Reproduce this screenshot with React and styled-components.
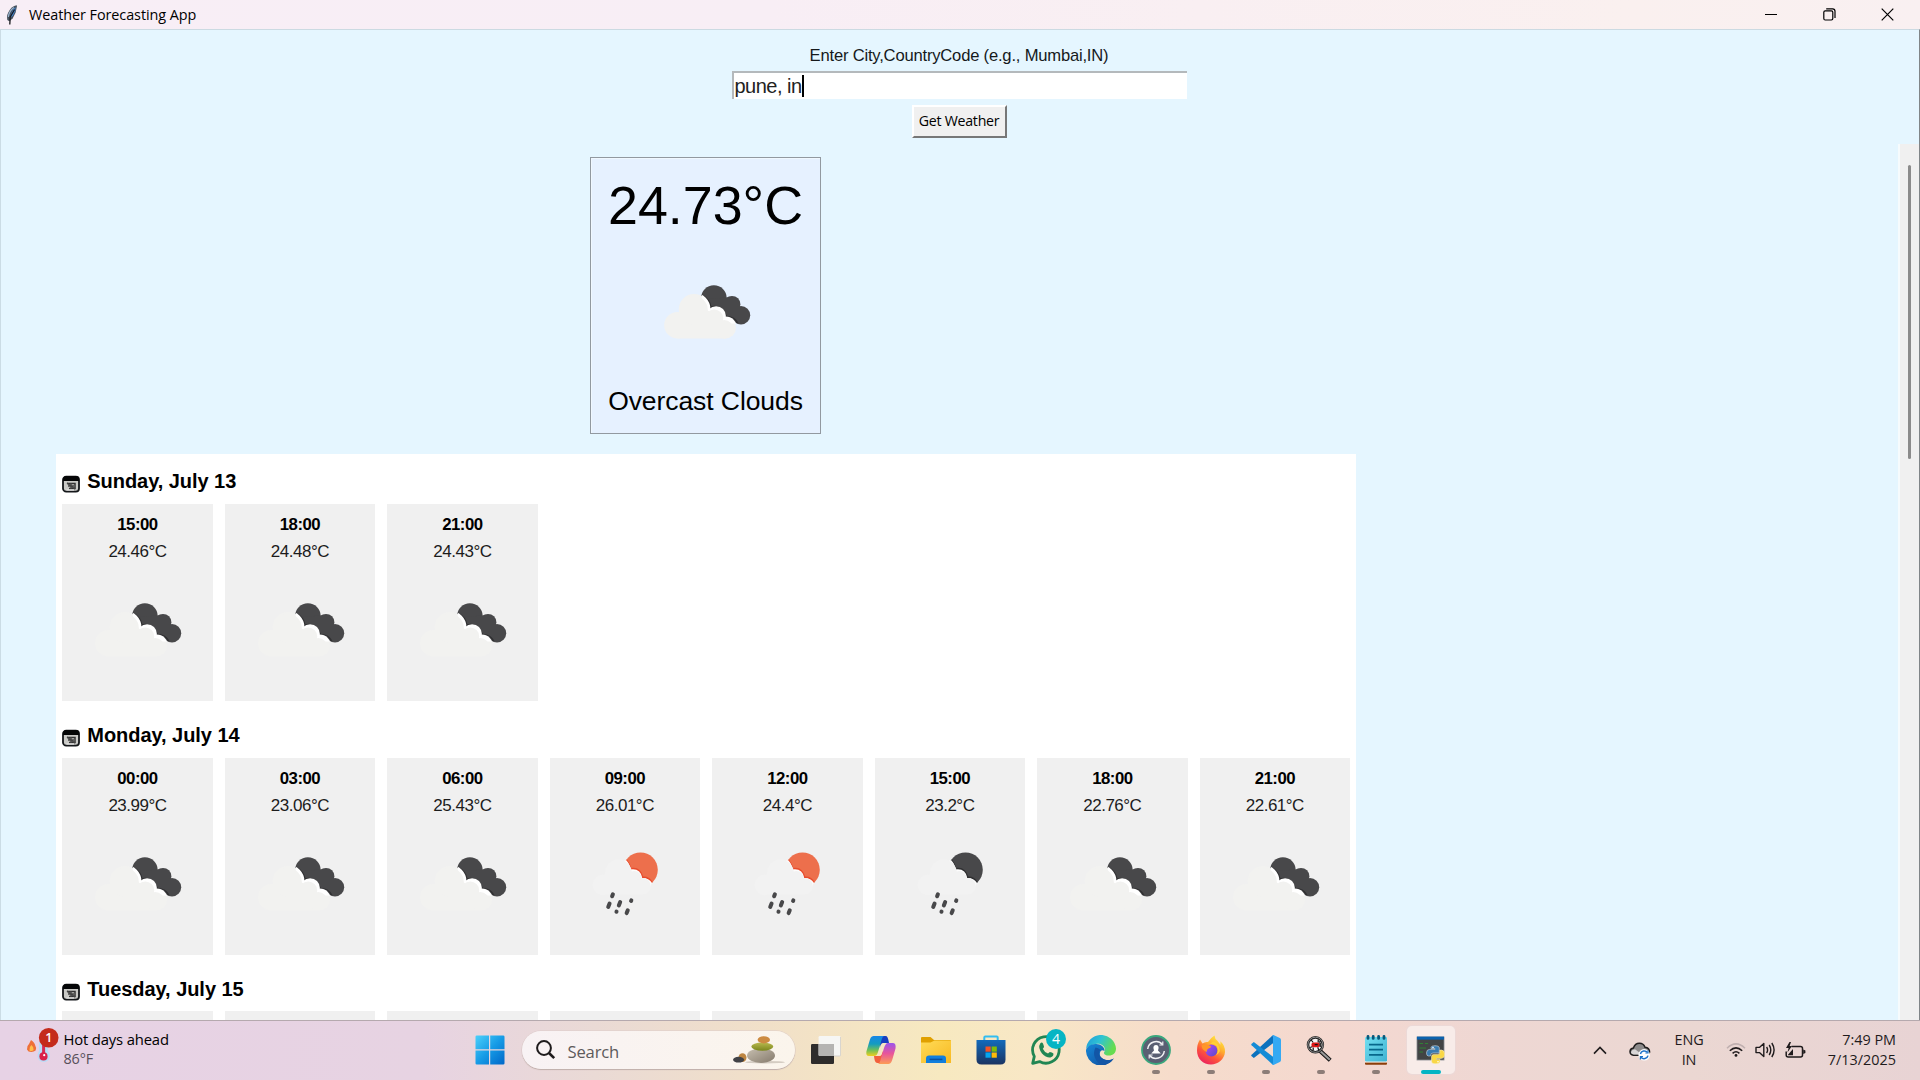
import React from 'react';
import styled, { createGlobalStyle } from 'styled-components';

const ARIAL = '"Liberation Sans", Arial, sans-serif';
const SEGOE = '"Open Sans", "Noto Sans", sans-serif';

const Global = createGlobalStyle`
  * { box-sizing: border-box; }
  body { margin: 0; overflow: hidden; background: #e5f6ff; }
  svg { display: block; flex: none; }
`;

const Screen = styled.div`
  display: flex;
  flex-direction: column;
  width: 1920px;
  height: 1080px;
  overflow: hidden;
  color: #000;
  font-family: ${ARIAL};
`;

/* ---------- window chrome ---------- */
const TitleBar = styled.header`
  display: flex;
  align-items: center;
  flex: none;
  height: 29px;
  padding-left: 5px;
  background: linear-gradient(90deg, #f8eef6 0%, #f8eef5 40%, #faf0ef 85%, #f9f0f1 100%);
`;
const TitleText = styled.span`
  margin-left: 9px;
  font: 14.4px/28px ${SEGOE};
  letter-spacing: -0.06px;
  white-space: nowrap;
`;
const WindowButtons = styled.div`
  display: flex;
  margin-left: auto;
  padding-right: 3px;
`;
const WindowButton = styled.div`
  display: grid;
  place-items: center;
  width: 58.5px;
  height: 28px;
`;
const Body = styled.main`
  display: flex;
  flex-direction: column;
  flex: none;
  height: 991px;
  overflow: hidden;
  background: #e5f6ff;
  border: solid;
  border-width: 1px 1px 0 1px;
  border-color: #cbdae2 #808588 #cbdae2 #cbdce5;
`;

/* ---------- search form ---------- */
const Form = styled.section`
  display: flex;
  flex-direction: column;
  align-items: center;
  flex: none;
  height: 114px;
  padding: 16px 2px 0 0;
`;
const FieldLabel = styled.label`
  height: 25px;
  font-size: 16.6px;
  line-height: 20px;
  letter-spacing: -0.2px;
  color: #15191b;
  white-space: nowrap;
`;
const Entry = styled.div`
  display: flex;
  align-items: center;
  width: 455px;
  height: 28px;
  padding: 0 0 0 1px;
  background: #fff;
  border-top: 2px solid #b4b9bc;
  border-left: 2px solid #b4b9bc;
  font-size: 20px;
  line-height: 24px;
  letter-spacing: -0.5px;
  color: #222;
`;
const Caret = styled.span`
  width: 2px;
  height: 22px;
  background: #000;
`;
const Submit = styled.div`
  display: flex;
  align-items: center;
  justify-content: center;
  width: 95px;
  height: 33px;
  margin-top: 6px;
  padding-bottom: 2px;
  background: #f0f0f0;
  border: 2px solid;
  border-color: #fff #777 #777 #fff;
  font: 14.2px/26px ${SEGOE};
  letter-spacing: -0.25px;
  white-space: nowrap;
`;

/* ---------- scrollable area ---------- */
const Scroller = styled.div`
  display: flex;
  flex: 1;
  min-height: 0;
`;
const Content = styled.div`
  flex: 1;
  overflow: hidden;
  padding: 13px 0 0 55px;
`;
const ScrollTrack = styled.div`
  width: 21px;
  padding: 21px 0 0 8px;
  background: #f0f0f0;
  border-left: 2px solid #f6fbfd;
`;
const ScrollThumb = styled.div`
  width: 3px;
  height: 294px;
  border-radius: 2px;
  background: #8b8b8b;
`;
const Current = styled.section`
  display: flex;
  flex-direction: column;
  align-items: center;
  width: 231px;
  height: 277px;
  margin: 0 0 0 534px;
  padding-top: 17px;
  background: #e6f1ff;
  border: 1px solid #9299a0;
  box-shadow: inset 1px 1px 0 #f0f8ff;
`;
const CurrentTemp = styled.div`
  height: 88px;
  font-size: 53.8px;
  line-height: 60px;
  white-space: nowrap;
`;
const CurrentDesc = styled.div`
  margin-top: 22px;
  font-size: 26.5px;
  line-height: 32px;
  letter-spacing: -0.08px;
  white-space: nowrap;
`;
const ForecastColumn = styled.div`
  width: 1300px;
`;
const Forecast = styled.section`
  width: 1300px;
  height: 620px;
  margin-top: 20px;
  padding-left: 6.3px;
  background: #fff;
`;
const Day = styled.div`
  height: 253.6px;
`;
const DayHead = styled.div`
  display: flex;
  align-items: flex-end;
  height: 50px;
  padding-bottom: 10.6px;
  font-size: 20px;
  font-weight: 700;
  white-space: nowrap;
`;
const DayName = styled.span`
  margin-left: 7px;
  line-height: 23px;
  letter-spacing: -0.05px;
`;
const Hours = styled.div`
  display: flex;
  gap: 12.2px;
`;
const Hour = styled.article`
  display: flex;
  flex-direction: column;
  align-items: center;
  flex: none;
  width: 150.3px;
  height: 197px;
  padding-top: 7px;
  background: #f0f0f0;
`;
const HourTime = styled.div`
  height: 27px;
  font-size: 16.8px;
  font-weight: 700;
  line-height: 27px;
  letter-spacing: -0.5px;
`;
const HourTemp = styled.div`
  height: 43px;
  font-size: 17px;
  line-height: 28px;
  letter-spacing: -0.5px;
  color: #1c1c1c;
`;

/* ---------- taskbar ---------- */
const Taskbar = styled.footer`
  display: flex;
  flex: none;
  height: 60px;
  border-top: 1px solid #b5a9ae;
  font-family: ${SEGOE};
  background: linear-gradient(90deg, #e7d2e5 0%, #e7d3e2 22%, #eadad5 31%, #f1e0c8 40%, #f7e9c0 49%, #f8e7c6 54%, #f6dccb 61%, #f4d8d0 70%, #eed7d3 78%, #ebd7d2 88%, #e8d3d4 100%);
`;
const Widget = styled.div`
  display: flex;
  width: 462px;
  padding: 7px 0 0 26px;
`;
const WidgetText = styled.div`
  margin-left: 4.5px;
  padding-top: 1px;
  font-size: 14.8px;
  line-height: 20px;
  letter-spacing: -0.15px;
  white-space: nowrap;
`;
const Muted = styled.div`
  color: #57505a;
  font-size: 14.4px;
`;
const Slot = styled.div`
  display: flex;
  flex-direction: column;
  align-items: center;
  flex: none;
  width: 55px;
  padding-top: 5px;
`;
const Tile = styled.div`
  display: grid;
  place-items: center;
  width: 48px;
  height: 48px;
  border-radius: 5px;
  background: ${(p) => (p.$active ? '#f8ece9' : 'transparent')};
  box-shadow: ${(p) => (p.$active ? '0 0 0 1px #ecd9d7' : 'none')};
`;
const Indicator = styled.div`
  width: ${(p) => (p.$active ? 20 : 8)}px;
  height: 4px;
  margin-top: -4px;
  border-radius: 2px;
  background: ${(p) => (p.$active ? '#05b5c4' : '#8c7d78')};
`;
const SearchBox = styled.div`
  display: flex;
  align-items: center;
  width: 273px;
  height: 38px;
  margin: 10px 3.5px 0 5px;
  padding: 0 9px 0 14px;
  border-radius: 19px;
  background: linear-gradient(90deg, #f8f2f4, #fbf5ec);
  box-shadow: 0 1px 1px #bfaeaa, 0 0 0 0.5px #dccbc9;
`;
const SearchText = styled.span`
  margin: 0 auto 0 11.5px;
  padding-top: 2px;
  font-size: 16.6px;
  color: #5d5a5b;
  letter-spacing: -0.15px;
`;
const Tray = styled.div`
  display: flex;
  align-items: center;
  margin-left: auto;
  padding-right: 24px;
  color: #1f1b1c;
  font-size: 14.4px;
  line-height: 20px;
`;
const SyncGlyph = styled.div`
  margin-left: 22px;
`;
const Language = styled.div`
  width: 46px;
  margin: 0 14px 0 15px;
  padding-bottom: 1px;
  text-align: center;
  letter-spacing: -0.1px;
`;
const TrayGlyphs = styled.div`
  display: flex;
  gap: 9px;
`;
const Clock = styled.div`
  width: 90px;
  text-align: right;
  white-space: nowrap;
  padding-bottom: 2px;
`;

/* ---------- weather drawings ---------- */
const CloudIcon = () => (
  <svg width="100" height="100" viewBox="0.4 0 100 100">
    <clipPath id="rim"><path d="M46 28H92V60.5H46Z" /></clipPath>
    <g fill="#48484a">
      <circle cx="58.3" cy="35" r="12.8" />
      <circle cx="76.4" cy="41.3" r="8.4" />
      <circle cx="85.4" cy="52.2" r="9.2" />
      <path d="M54 36L76 34L88 52L80 60L56 50Z" />
    </g>
    <path d="M46 32.1Q54 36 55.2 44.1Q66 41.5 70.8 53.7Q79 53.5 82 60.2" fill="none" stroke="#303032" strokeWidth="1.6" />
    <g fill="#f2f2f0">
      <circle cx="38.4" cy="46.3" r="15.2" />
      <circle cx="21.9" cy="62.2" r="13.3" />
      <circle cx="59.7" cy="54.2" r="9.6" />
      <circle cx="70" cy="65" r="10.4" />
      <path d="M22 52L38 38L60 54L70 64V75.4H22Z" />
    </g>
    <g fill="#fff" clipPath="url(#rim)">
      <circle cx="38.8" cy="46" r="16" />
      <circle cx="60.5" cy="53" r="9.8" />
      <circle cx="70.2" cy="64.5" r="11" />
    </g>
    <g fill="#f2f2f0">
      <circle cx="38" cy="47" r="14.2" />
      <circle cx="58.6" cy="55.4" r="9" />
      <circle cx="68.6" cy="66.2" r="9.2" />
      <path d="M38 46H50L62 54V64H38Z" />
    </g>
  </svg>
);

const DROPS = [
  [37.5, 60.3, 1], [33.9, 70.3, 1.7], [44.5, 68.7, 1.7], [56.2, 65.7, 0.3], [41.5, 76.7, 0.1], [52.2, 76.7, 1.4],
];
const RainIcon = ({ color, edge }) => (
  <svg width="100" height="100" viewBox="0 0 100 100">
    <circle cx="65.5" cy="34.8" r="17.3" fill={color} />
    <path d="M51.2 25Q54.6 29 55.6 33.8Q65 32 67.6 42.5Q74 42 77 47.6" fill="none" stroke={edge} strokeWidth="1.8" />
    <path d="M51 25Q55 29 55.4 34.4Q65.6 33 67.2 43Q73.6 42.8 77 48L73 55H48L40 30Z" fill="#fdfdfd" />
    <g fill="#f2f2f2">
      <circle cx="43.5" cy="37.7" r="13.2" />
      <circle cx="27.8" cy="50" r="10.2" />
      <circle cx="59.3" cy="43.5" r="7.4" />
      <circle cx="67.7" cy="51.2" r="8.2" />
      <path d="M28 40L44 30L60 42L68 50V59.4H28Z" />
    </g>
    <g stroke="#48484a" strokeWidth="4" strokeLinecap="round">
      {DROPS.map(([x, y, l]) => (
        <path key={x} d={`M${x + l * 0.4} ${y - l}L${x - l * 0.4} ${y + l}`} />
      ))}
    </g>
  </svg>
);
const ICONS = {
  cloud: <CloudIcon />,
  rainDay: <RainIcon color="#ed6f4c" edge="#e84c2d" />,
  rainNight: <RainIcon color="#48484a" edge="#2f2f31" />,
};

const CalendarIcon = () => (
  <svg width="18" height="18" viewBox="0 0 18 18">
    <rect x="1" y="1.6" width="16" height="15" rx="3.2" fill="#c9c9c6" stroke="#14171a" strokeWidth="1.8" />
    <path d="M1 6V4Q1.5 1 4.5 1H13.5Q17 1 17.2 4V6Z" fill="#050607" />
    <path d="M5 8.5H13V13.5H7" fill="none" stroke="#333" strokeWidth="1.5" />
    <path d="M5 8L13 14M6 11H12M9 8V14" stroke="#444" strokeWidth="1.4" />
    <path d="M4.5 15H12" stroke="#eee" strokeWidth="1" />
  </svg>
);

const Feather = () => (
  <svg width="15" height="22" viewBox="0 0 15 22">
    <path d="M11.6 1.2C7 1.8 3 7 2 12.2L2.3 16L4.3 17.2L7.6 14.6L10.6 8.4L12 2Z" fill="#46515e" />
    <path d="M10.4 3C7.5 6 5.8 9.5 5 14L8 11.6L10.4 6.5Z" fill="#4286d6" />
    <path d="M8.8 3.6C5.5 6 3.8 9.5 3.3 13" stroke="#9bb4cf" strokeWidth="1.2" fill="none" />
    <path d="M9.6 5.5L5.2 13L4.8 20.5" stroke="#17191c" strokeWidth="1.3" fill="none" />
  </svg>
);

/* ---------- taskbar drawings ---------- */
const HeatIcon = () => (
  <svg width="33" height="36" viewBox="0 0 33 36">
    <path d="M5 12C8 14 9 16 9.4 18Q11 20 9.6 22.6Q8 24 5.3 24Q2 24 1 21.4Q.5 18 3 16Z" fill="#ee7038" />
    <path d="M5.4 17Q8 19 7.6 22Q5.6 24 3.4 22.4Q3 19 5.4 17Z" fill="#ffc04b" />
    <path d="M13 14H22V23Q24 25 24 28Q23 34 17.5 34Q12 33.5 11.5 28Q11.5 25 13 23Z" fill="#b9dcf7" />
    <path d="M17.6 14V28" stroke="#d82c53" strokeWidth="3" />
    <circle cx="17.5" cy="28.4" r="4.1" fill="#d9224b" />
    <circle cx="18.2" cy="27.2" r="1.1" fill="#fff" />
    <circle cx="22.7" cy="9.8" r="9.8" fill="#c42b1c" />
    <text x="22.9" y="14.4" fill="#fff" fontSize="12.5" fontWeight="600" textAnchor="middle" fontFamily={SEGOE}>1</text>
  </svg>
);

const StartIcon = () => (
  <svg width="30" height="30" viewBox="0 0 30 30">
    <defs>
      <linearGradient id="win" x1="0" y1="0" x2="1" y2="1">
        <stop offset="0" stopColor="#4bd0fa" /><stop offset=".5" stopColor="#169be6" /><stop offset="1" stopColor="#0067c8" />
      </linearGradient>
    </defs>
    <path fill="url(#win)" d="M1.8.5H14V14.2H.5V1.8Q.5.5 1.8.5ZM15.2.5H28.2Q29.5.5 29.5 1.8V14.2H15.2ZM.5 15.5H14V29.5H1.8Q.5 29.5.5 28.2ZM15.2 15.5H29.5V28.2Q29.5 29.5 28.2 29.5H15.2Z" />
  </svg>
);
const SearchGlyph = () => (
  <svg width="20" height="20" viewBox="0 0 20 20" fill="none" stroke="#1e1b1c">
    <circle cx="8" cy="8" r="6.9" strokeWidth="2" />
    <path d="M13 13L18.2 18.2" strokeWidth="2.6" />
  </svg>
);
const StonesIcon = () => (
  <svg width="54" height="28" viewBox="0 0 54 28">
    <defs>
      <linearGradient id="stone" x1="0" y1="0" x2="1" y2="1"><stop offset="0" stopColor="#c7bfb0" /><stop offset="1" stopColor="#857a6c" /></linearGradient>
      <linearGradient id="moss" x1="0" y1="0" x2="0" y2="1"><stop offset="0" stopColor="#b9b94e" /><stop offset="1" stopColor="#7b861d" /></linearGradient>
    </defs>
    <ellipse cx="33" cy="26.2" rx="20" ry="1.2" fill="#d4ccc2" />
    <ellipse cx="10.5" cy="21.6" rx="4" ry="4.4" fill="#bd8541" />
    <ellipse cx="6.6" cy="23.7" rx="5.6" ry="2.9" fill="#414246" />
    <ellipse cx="29" cy="19.6" rx="14" ry="7.3" fill="url(#stone)" />
    <ellipse cx="30.3" cy="10.6" rx="11" ry="4.2" fill="url(#moss)" />
    <ellipse cx="31.8" cy="3.8" rx="6.2" ry="3.6" fill="#cc8b42" />
  </svg>
);
const TaskViewIcon = () => (
  <svg width="30" height="28" viewBox="0 0 30 28">
    <rect x="0" y="8" width="23" height="20" rx="1.2" fill="#2e2c2b" />
    <rect x="7.6" y="0" width="22" height="20" rx="1.2" fill="#f6f6f4" />
    <path d="M7.6 8H23V20H8.6Q7.6 20 7.6 19Z" fill="#b5b4b2" />
    <path d="M23 20H28.5Q29.6 20 29.6 19V1" fill="none" stroke="#d5d2ce" />
  </svg>
);
const CopilotIcon = () => (
  <svg width="30" height="28" viewBox="0 0 30 28">
    <defs>
      <linearGradient id="cpA" x1="0" y1="0" x2="0" y2="1"><stop offset="0" stopColor="#1886e8" /><stop offset=".4" stopColor="#149cc0" /><stop offset=".7" stopColor="#6cbf5b" /><stop offset="1" stopColor="#f0cf1c" /></linearGradient>
      <linearGradient id="cpB" x1="0" y1="0" x2="0" y2="1"><stop offset="0" stopColor="#9b54ec" /><stop offset=".5" stopColor="#e8559b" /><stop offset="1" stopColor="#fd9d55" /></linearGradient>
    </defs>
    <path d="M14 0H19.5C21.5 0 22 2 22.6 5L23 7H18C15 7 14.5 9 13.8 12Z" fill="#163ec0" />
    <path d="M8 20H13.5C15.5 20 16 18 16.8 15L17.2 20L14 27H11.5C9 27 8.5 24 8 20Z" fill="#f2603c" />
    <path d="M7.5 0H18C16 1 15.5 4 14.4 8L12 16C11 19 10 20 8 20H3C.5 20 0 18 .4 15.5L3.5 5C4.4 2 5 .5 7.5 0Z" fill="url(#cpA)" />
    <path d="M22.5 28H12C14 27 14.5 24 15.6 20L18 12C19 9 20 7 22 7H27C29.5 7 30 10 29.5 12.5L26.5 23C25.5 26 25 27.6 22.5 28Z" fill="url(#cpB)" />
  </svg>
);
const ExplorerIcon = () => (
  <svg width="30" height="28" viewBox="0 0 30 28">
    <defs><linearGradient id="fold" x1="0" y1="0" x2="1" y2="1"><stop offset="0" stopColor="#ffdb57" /><stop offset="1" stopColor="#f8b922" /></linearGradient></defs>
    <path d="M0 2Q0 1 1 1H9.5L13 4H29Q30 4 30 5V10H0Z" fill="#e0a000" />
    <path d="M0 6.5H9.5L13.5 4.6H30V27H0Z" fill="url(#fold)" />
    <path d="M5 27V22.5Q5 19.5 8 19.5H22Q25 19.5 25 22.5V27Z" fill="#117fdd" />
    <path d="M8.6 23.4H21.4" stroke="#0b519f" strokeWidth="1.5" />
  </svg>
);
const StoreIcon = () => (
  <svg width="30" height="30" viewBox="0 0 30 30">
    <defs><linearGradient id="store" x1="0" y1="0" x2="0" y2="1"><stop offset="0" stopColor="#126abb" /><stop offset="1" stopColor="#1b3462" /></linearGradient></defs>
    <path d="M8.3 7V2.4Q8.3 1.4 9.3 1.4H20.7Q21.7 1.4 21.7 2.4V7" fill="none" stroke="#32bdf1" strokeWidth="2" />
    <path d="M.5 5H29.5V24.5Q29.5 29.5 24.5 29.5H5.5Q.5 29.5.5 24.5Z" fill="url(#store)" />
    <rect x="9.5" y="11.5" width="5.2" height="5.2" fill="#f35325" /><rect x="15.6" y="11.5" width="5.2" height="5.2" fill="#81bc06" />
    <rect x="9.5" y="17.5" width="5.2" height="5.2" fill="#05a6f0" /><rect x="15.6" y="17.5" width="5.2" height="5.2" fill="#ffba08" />
  </svg>
);
const WhatsAppIcon = () => (
  <svg width="48" height="48" viewBox="0 0 48 48">
    <path d="M10.7 37.4L12.3 30.4A13.3 13.3 0 1 1 17.6 35.6Z" fill="none" stroke="#218653" strokeWidth="2.8" strokeLinejoin="round" />
    <path d="M18.2 17.5Q19.8 15.8 21 17.4L22 20.4Q22 21.6 20.8 22.8Q22.2 26 26 27.6L27.8 26Q30 26.3 31.4 27.6Q31.8 30.8 28.4 31.4Q24 31.8 20 27.4Q15.6 21.6 18.2 17.5Z" fill="#218653" />
    <circle cx="34" cy="13" r="10" fill="#05b5c4" />
    <text x="34" y="17.8" fill="#fff" fontSize="14" textAnchor="middle" fontFamily={SEGOE}>4</text>
  </svg>
);
const EdgeIcon = () => (
  <svg width="30" height="30" viewBox="0 0 30 30">
    <defs>
      <linearGradient id="edA" x1="0" y1="0" x2="1" y2=".4"><stop offset="0" stopColor="#2099dd" /><stop offset=".5" stopColor="#2fc3d2" /><stop offset="1" stopColor="#66dc50" /></linearGradient>
      <linearGradient id="edB" x1="0" y1="0" x2="1" y2="1"><stop offset="0" stopColor="#1688d8" /><stop offset="1" stopColor="#104a9a" /></linearGradient>
    </defs>
    <path d="M.1 14A15 15 0 0 1 30 13.5C30 18 27 20.5 23 20.5C19.5 20.5 17.6 19 18 17.5C21 13 16 8 10 9C5 9.5 1.5 12 .1 14Z" fill="url(#edA)" />
    <path d="M0 15C1 11.5 5.5 8.5 10.2 9C15.5 9.2 19 12.5 18.4 16C14 13 11.5 21 17 24C21 26.3 25 25 27.8 23.4A15 15 0 0 1 0 15Z" fill="url(#edB)" />
    <path d="M9.5 12.5C6 19 9 26.5 15.6 29.9Q23.5 30 27.8 23.4C24 25.6 19.5 25.6 16 23C12.4 20.5 12.4 17 14.6 14.9Q12 13 9.5 12.5Z" fill="#1356a6" />
  </svg>
);
const RecoveryIcon = () => (
  <svg width="30" height="30" viewBox="0 0 30 30">
    <circle cx="15" cy="15" r="14" fill="#5a5f73" stroke="#3aa77d" strokeWidth="1.8" />
    <g fill="none" stroke="#f1f1f4" strokeWidth="1.5">
      <path d="M6.7 14A8.4 8.4 0 0 1 21.4 9.6M23.3 16A8.4 8.4 0 0 1 8.6 20.4" />
      <path d="M21.8 6.6V10H18.4M8.2 23.4V20H11.6" strokeWidth="1.2" />
    </g>
    <path d="M12.4 13Q12.4 10 15 10Q17.6 10 17.6 13L17 15.6L19.8 18.6H10.2L13 15.6Z" fill="#fff" />
  </svg>
);
const FirefoxIcon = () => (
  <svg width="30" height="30" viewBox="0 0 30 30">
    <defs>
      <linearGradient id="ff" x1=".8" y1="0" x2=".2" y2="1"><stop offset="0" stopColor="#fff044" /><stop offset=".35" stopColor="#ffb02e" /><stop offset=".65" stopColor="#fd553b" /><stop offset="1" stopColor="#e91a63" /></linearGradient>
      <linearGradient id="ffp" x1="0" y1="0" x2="1" y2="1"><stop offset="0" stopColor="#b04af4" /><stop offset="1" stopColor="#5849cc" /></linearGradient>
    </defs>
    <path d="M4 4.5L6.5 8.4Q9 6.5 12 7Q14.5 3 18.5.5Q18.8 4 21.4 5.7L24.4 9.8V6.2Q29.5 11 29 17C28.4 24.5 22 29.5 15 29.5C7 29.5.9 23.4 1 15.5Q1 9 4 4.5Z" fill="url(#ff)" />
    <circle cx="15.4" cy="15.6" r="6" fill="url(#ffp)" />
    <path d="M5.5 10.5Q9 8.5 14.5 11Q16 12.4 12.5 13.6Q11 14 10.6 17Q6 15 5.5 10.5Z" fill="#ff9629" />
    <path d="M14 9Q21.5 8 21.8 15.3Q22 18 20 20Q22.5 19 24 16Q23 8 17 6.6Z" fill="#ffd137" />
  </svg>
);
const VSCodeIcon = () => (
  <svg width="30" height="30" viewBox="0 0 30 30">
    <path d="M22 8.2L2.8 23L.4 21Q0 20.4.6 19.8L21.2.7L23 .4Z" fill="#0c71bd" />
    <path d="M22 21.8L2.8 7L.4 9Q0 9.6.6 10.2L21.2 29.3L23 29.6Z" fill="#148bd6" />
    <path d="M21.2.6Q22-.2 23 .2L28.8 3Q30 3.6 30 5V25Q30 26.4 28.8 27L23 29.8Q22 30.2 21.2 29.4L22 28V2Z" fill="#35a9f3" />
  </svg>
);
const MagnifierIcon = () => (
  <svg width="30" height="30" viewBox="0.8 0 30 30">
    <path d="M15 16L25 25.2" stroke="#111" strokeWidth="4.2" />
    <path d="M15 16L24.6 24.8" stroke="#999" strokeWidth="2.2" />
    <circle cx="10.2" cy="9.8" r="7.4" fill="#f7f5f5" stroke="#242424" strokeWidth="2.6" />
    <circle cx="10.2" cy="9.8" r="7.6" fill="none" stroke="#aaa" strokeWidth=".8" />
    <path d="M6 5L8 7.5M13 4.5V7.5M5 12.5L7.5 11.5M8 15.5V12.5M13.5 15L12.5 12.3M15.5 5.5L14 7.5" stroke="#111" strokeWidth="1.2" />
    <rect x="6.2" y="7.6" width="8.5" height="4.6" rx="2.2" fill="#dd1717" />
    <path d="M9.5 9.6H12.5M15 7.6V12" stroke="#111" strokeWidth="1.3" />
  </svg>
);
const NotepadIcon = () => (
  <svg width="24" height="30" viewBox="0 0 24 30">
    <defs><linearGradient id="note" x1="0" y1="0" x2="1" y2="1"><stop offset="0" stopColor="#72dff1" /><stop offset="1" stopColor="#40b3d2" /></linearGradient></defs>
    <rect x="1" y="25" width="22" height="4.8" rx="1" fill="#8c3d09" />
    <rect x="1" y="26" width="22" height="1.6" fill="#f4f0eb" />
    <rect x="1" y="2" width="22" height="24.4" rx="1.2" fill="url(#note)" />
    <path d="M4 1.5V3.4M9.2 1.5V3.4M14.6 1.5V3.4M20 1.5V3.4" stroke="#07597b" strokeWidth="2.8" strokeLinecap="round" />
    <path d="M5 9.6H19M5 14.7H19M5 19.8H19" stroke="#07678b" strokeWidth="1.8" />
  </svg>
);
const PythonIcon = () => (
  <svg width="30" height="30" viewBox="0 0 30 30">
    <g>
      <rect x="1" y="2" width="27" height="23" fill="#424445" stroke="#858b8e" strokeWidth=".8" />
      <rect x="1" y="1.6" width="27" height="3" fill="#0b62ae" />
      <path d="M3.5 8.5H7M9 8.5H12M3.5 13H10M3.5 17H7" stroke="#2f8134" strokeWidth="1" />
    </g>
    <path d="M15 12.5Q15 10.7 19 10.7Q23.3 10.7 23.3 13V18H17Q14.5 18 14.5 21H12.5Q10.5 21 10.5 18Q10.5 14.4 13.5 14.4H19V13.6H15Z" fill="#397bb1" stroke="#e8eef2" strokeWidth=".5" />
    <path d="M23.8 15H25.5Q28.6 15.2 28.6 19Q28.6 23.4 25 23.4H20.6V24.4H24V26.6Q24 28.8 19.8 28.8Q15.5 28.8 15.5 26.2V21.5Q15.5 19.4 18 19.4H21.8Q23.8 19.4 23.8 17.4Z" fill="#f9d746" stroke="#f6f0d8" strokeWidth=".5" />
    <circle cx="17" cy="12.6" r=".8" fill="#fff" /><circle cx="22" cy="26.7" r=".8" fill="#fff" />
  </svg>
);

const APPS = [
  { id: 'taskview', icon: <TaskViewIcon /> },
  { id: 'copilot', icon: <CopilotIcon /> },
  { id: 'explorer', icon: <ExplorerIcon /> },
  { id: 'store', icon: <StoreIcon /> },
  { id: 'whatsapp', icon: <WhatsAppIcon /> },
  { id: 'edge', icon: <EdgeIcon /> },
  { id: 'recovery', icon: <RecoveryIcon />, open: true },
  { id: 'firefox', icon: <FirefoxIcon />, open: true },
  { id: 'vscode', icon: <VSCodeIcon />, open: true },
  { id: 'magnifier', icon: <MagnifierIcon />, open: true },
  { id: 'notepad', icon: <NotepadIcon />, open: true },
  { id: 'python', icon: <PythonIcon />, open: true, active: true },
];

const ChevronIcon = () => (
  <svg width="14" height="9" viewBox="0 0 14 9" fill="none" stroke="#211d1e" strokeWidth="1.6"><path d="M1 7.6L7 1.4L13 7.6" /></svg>
);
const OneDriveIcon = () => (
  <svg width="22" height="20" viewBox="0 0 22 20">
    <path d="M4.5 14.2Q1 13.8 1 10.6Q1.2 7.4 4.4 7Q6 2.2 10.4 2.2Q14.6 2.2 16 6.2Q20.6 6.8 20.6 11Q20 14 17 14.2Z" fill="#8d8b8b" stroke="#1f1d1d" strokeWidth="1.5" />
    <path d="M2 11Q3 8.4 6 8.2L13 13.5H5Q2 13.4 2 11Z" fill="#d9d6d6" />
    <circle cx="15.2" cy="13.8" r="5.8" fill="#fff" />
    <g fill="none" stroke="#1d72ca" strokeWidth="1.5"><path d="M11.4 13A4 4 0 0 1 18.4 11.4M19 14.6A4 4 0 0 1 12 16.2" /><path d="M19 9.2V12H16.4M11.4 18.4V15.6H14" strokeWidth="1.2" /></g>
  </svg>
);
const WifiIcon = () => (
  <svg width="20" height="16" viewBox="0 0 20 16" fill="none" stroke="#1f1b1c" strokeWidth="1.5">
    <path d="M1 6.2Q10-2.4 19 6.2" stroke="#c0b0b0" />
    <path d="M3.8 8.8Q10 3 16.2 8.8M6.6 11.4Q10 8 13.4 11.4" />
    <circle cx="10" cy="13.4" r="1.4" fill="#1f1b1c" stroke="none" />
  </svg>
);
const SpeakerIcon = () => (
  <svg width="21" height="16" viewBox="0 0 21 16" fill="none" stroke="#1f1b1c" strokeWidth="1.4">
    <path d="M1 5.4H4.4L8.8 1.4V14.6L4.4 10.6H1Z" strokeLinejoin="round" />
    <path d="M11.6 5Q13.6 8 11.6 11M14.2 3Q17.4 8 14.2 13M16.8 1Q21.4 8 16.8 15" />
  </svg>
);
const BatteryIcon = () => (
  <svg width="21" height="17" viewBox="0 0 21 17">
    <path d="M6.5 4.5H15.5Q17.5 4.5 17.5 6.5V13Q17.5 15 15.5 15H3.2Q1.2 15 1.2 13V9.6" fill="none" stroke="#1f1b1c" strokeWidth="1.5" />
    <path d="M18.2 7.6L20.4 8.4V11L18.2 12Z" fill="#1f1b1c" />
    <path d="M4.5 0L1 6H3.6L2.4 10.4L7 4H4.6L6 0Z" fill="#1f1b1c" />
    <path d="M3 12.8L8 7V13.2H3Z" fill="#1f1b1c" />
  </svg>
);

const DAYS = [
  { name: 'Sunday, July 13', hours: [['15:00', '24.46°C', 'cloud'], ['18:00', '24.48°C', 'cloud'], ['21:00', '24.43°C', 'cloud']] },
  {
    name: 'Monday, July 14',
    hours: [
      ['00:00', '23.99°C', 'cloud'], ['03:00', '23.06°C', 'cloud'], ['06:00', '25.43°C', 'cloud'], ['09:00', '26.01°C', 'rainDay'],
      ['12:00', '24.4°C', 'rainDay'], ['15:00', '23.2°C', 'rainNight'], ['18:00', '22.76°C', 'cloud'], ['21:00', '22.61°C', 'cloud'],
    ],
  },
  { name: 'Tuesday, July 15', hours: Array.from({ length: 8 }, () => null) },
];

export default function App() {
  return (
    <Screen>
      <Global />
      <TitleBar>
        <Feather />
        <TitleText>Weather Forecasting App</TitleText>
        <WindowButtons>
          <WindowButton><svg width="12" height="12" viewBox="0 0 12 12"><path d="M0 5.5H12" stroke="#000" /></svg></WindowButton>
          <WindowButton>
            <svg width="13" height="13" viewBox="0 0 13 13" fill="none" stroke="#000" strokeWidth="1.2">
              <rect x=".8" y="2.8" width="9" height="9.2" rx="1.4" /><path d="M3.2.8H9.6Q12 .8 12 3.2V10" />
            </svg>
          </WindowButton>
          <WindowButton><svg width="13" height="13" viewBox="0 0 13 13"><path d="M.7.7L12.3 12.3M12.3.7L.7 12.3" stroke="#000" strokeWidth="1.2" /></svg></WindowButton>
        </WindowButtons>
      </TitleBar>
      <Body>
        <Form>
          <FieldLabel>Enter City,CountryCode (e.g., Mumbai,IN)</FieldLabel>
          <Entry>pune, in<Caret /></Entry>
          <Submit>Get Weather</Submit>
        </Form>
        <Scroller>
          <Content>
            <ForecastColumn>
              <Current>
                <CurrentTemp>24.73°C</CurrentTemp>
                {ICONS.cloud}
                <CurrentDesc>Overcast Clouds</CurrentDesc>
              </Current>
              <Forecast>
                {DAYS.map((day) => (
                  <Day key={day.name}>
                    <DayHead><CalendarIcon /><DayName>{day.name}</DayName></DayHead>
                    <Hours>
                      {day.hours.map((h, i) => (
                        <Hour key={i}>
                          {h && (<><HourTime>{h[0]}</HourTime><HourTemp>{h[1]}</HourTemp>{ICONS[h[2]]}</>)}
                        </Hour>
                      ))}
                    </Hours>
                  </Day>
                ))}
              </Forecast>
            </ForecastColumn>
          </Content>
          <ScrollTrack><ScrollThumb /></ScrollTrack>
        </Scroller>
      </Body>
      <Taskbar>
        <Widget>
          <HeatIcon />
          <WidgetText>Hot days ahead<Muted>86°F</Muted></WidgetText>
        </Widget>
        <Slot><Tile><StartIcon /></Tile></Slot>
        <SearchBox><SearchGlyph /><SearchText>Search</SearchText><StonesIcon /></SearchBox>
        {APPS.map((app) => (
          <Slot key={app.id}>
            <Tile $active={app.active}>{app.icon}</Tile>
            {app.open && <Indicator $active={app.active} />}
          </Slot>
        ))}
        <Tray>
          <ChevronIcon />
          <SyncGlyph><OneDriveIcon /></SyncGlyph>
          <Language>ENG<br />IN</Language>
          <TrayGlyphs><WifiIcon /><SpeakerIcon /><BatteryIcon /></TrayGlyphs>
          <Clock>7:49 PM<br />7/13/2025</Clock>
        </Tray>
      </Taskbar>
    </Screen>
  );
}
